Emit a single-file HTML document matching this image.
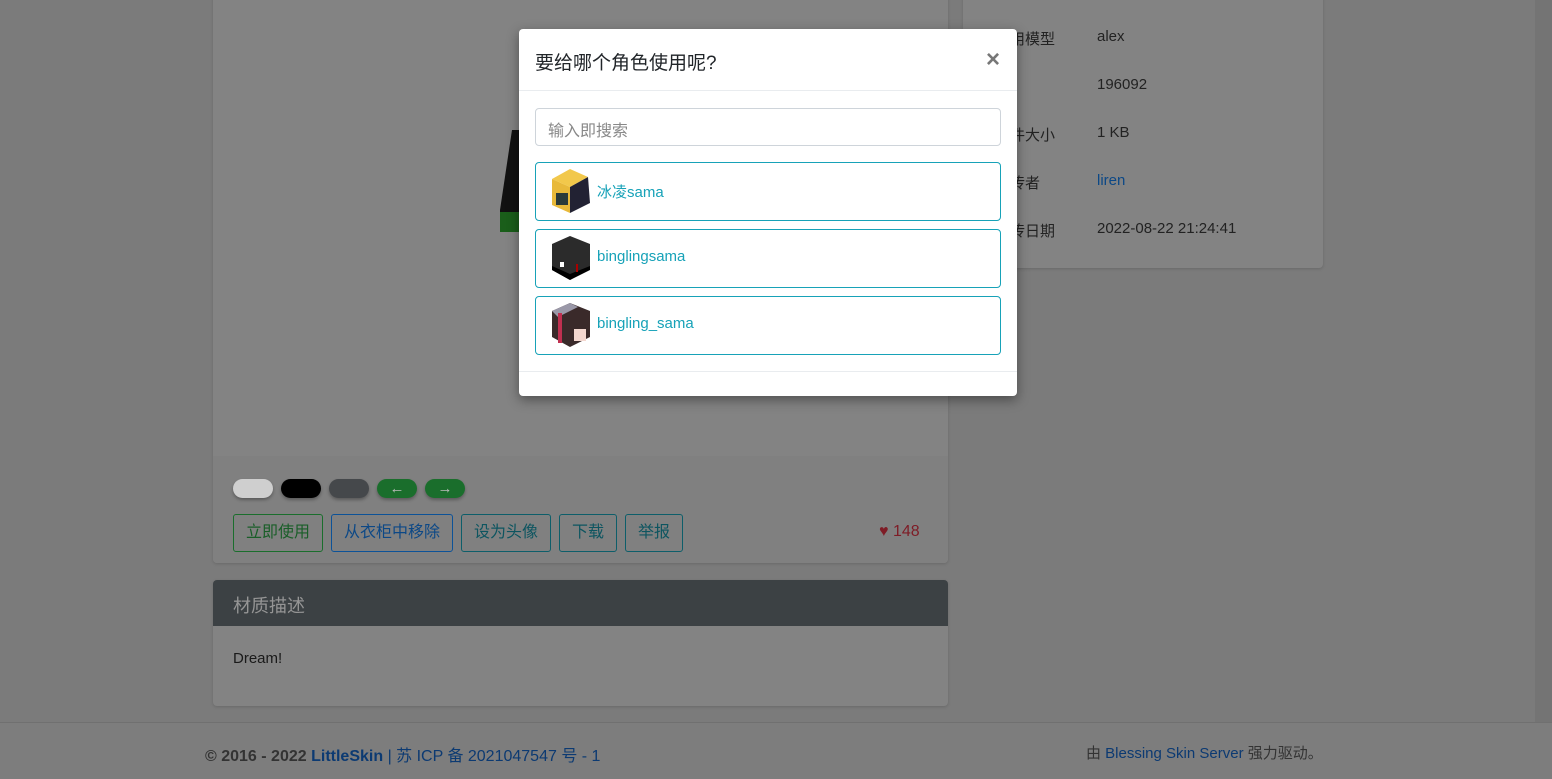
<!DOCTYPE html>
<html><head><meta charset="utf-8"><style>
*{box-sizing:border-box;margin:0;padding:0}
body{width:1552px;height:779px;overflow:hidden;background:#7b7b7b;font-family:"Liberation Sans","Noto Sans CJK SC",sans-serif;font-size:15px;color:#1a1a1a;position:relative}
.abs{position:absolute}
.card{position:absolute;background:#838383;border-radius:4px;box-shadow:0 1px 3px rgba(0,0,0,.15)}
.btn{position:absolute;top:514px;height:38px;border:1px solid;border-radius:3px;font-size:16px;line-height:36px;text-align:center}
.pill{position:absolute;top:479px;width:40px;height:19px;border-radius:10px;box-shadow:0 2px 3px rgba(0,0,0,.3);color:#bbb;text-align:center;font-size:15px;line-height:19px;font-weight:bold}
.row{position:absolute;left:1097px;color:#222;font-size:15px;top:0}
.lbl{position:absolute;left:1010px;color:#222;font-size:15px}
.item{position:absolute;left:16px;width:466px;height:59px;border:1px solid #17a2b8;border-radius:4px;color:#17a2b8;font-size:15px}
.item span{position:absolute;left:61px;top:18px}
.av{position:absolute;left:12px;top:6px;width:46px;height:44px}
</style></head><body>
<div class="abs" style="left:1535px;top:0;width:17px;height:722px;background:#747474"></div>
<div class="card" style="left:213px;top:-10px;width:735px;height:573px"></div>
<div class="abs" style="left:213px;top:456px;width:735px;height:107px;background:#808080;border-radius:0 0 4px 4px"></div>
<div class="abs" style="left:500px;top:130px;width:20px;height:100px;background:#111;clip-path:polygon(60% 0,100% 0,100% 100%,0 95%,0 80%)"></div>
<div class="abs" style="left:500px;top:212px;width:20px;height:20px;background:#1a5e1a"></div>
<div class="pill" style="left:233px;background:#cfcfcf"></div>
<div class="pill" style="left:281px;background:#000"></div>
<div class="pill" style="left:329px;background:#45484b"></div>
<div class="pill" style="left:377px;background:#1a6e2c">&#8592;</div>
<div class="pill" style="left:425px;background:#1a6e2c">&#8594;</div>
<div class="btn" style="left:233px;width:90px;border-color:#1a6e2c;color:#195e28">立即使用</div>
<div class="btn" style="left:331px;width:122px;border-color:#0c5298;color:#0c4886">从衣柜中移除</div>
<div class="btn" style="left:461px;width:90px;border-color:#0d5e6a;color:#0d5560">设为头像</div>
<div class="btn" style="left:559px;width:58px;border-color:#0d5e6a;color:#0d5560">下载</div>
<div class="btn" style="left:625px;width:58px;border-color:#0d5e6a;color:#0d5560">举报</div>
<div class="abs" style="left:879px;top:523px;color:#7e1c26;font-size:16px">&#9829; 148</div>
<div class="card" style="left:963px;top:-10px;width:360px;height:278px"></div>
<div class="lbl" style="top:28px">用模型</div><div class="row" style="top:28px">alex</div>
<div class="row" style="top:76px">196092</div>
<div class="lbl" style="top:124px">件大小</div><div class="row" style="top:124px">1 KB</div>
<div class="lbl" style="top:172px">传者</div><div class="row" style="top:172px;color:#0c4886">liren</div>
<div class="lbl" style="top:220px">传日期</div><div class="row" style="top:220px">2022-08-22 21:24:41</div>
<div class="card" style="left:213px;top:580px;width:735px;height:126px;overflow:hidden">
<div style="height:46px;background:#3c4144;color:#959595;font-size:18px;padding:12px 20px">材质描述</div>
<div style="padding:24px 20px;font-size:15px;color:#1a1a1a">Dream!</div></div>
<div class="abs" style="left:0;top:722px;width:1552px;height:57px;background:#7d7d7d;border-top:1px solid #707070"></div>
<div class="abs" style="left:205px;top:742px;font-size:16px;color:#333"><b>© 2016 - 2022 <span style="color:#0c3a72">LittleSkin</span></b> <span style="color:#0c3a72">| 苏 ICP 备 2021047547 号 - 1</span></div>
<div class="abs" style="left:1086px;top:742px;font-size:15px;color:#333">由 <span style="color:#0c3a72">Blessing Skin Server</span> 强力驱动。</div>

<div class="abs" style="left:519px;top:29px;width:498px;height:367px;background:#fff;border-radius:4px;box-shadow:0 4px 12px rgba(0,0,0,.4)">
<div style="height:62px;border-bottom:1px solid #e9ecef;padding:19px 16px;font-size:19px;color:#212529">要给哪个角色使用呢?<span style="position:absolute;right:17px;top:17px;font-size:24px;color:#777;font-weight:bold">&times;</span></div>
<div class="abs" style="left:16px;top:79px;width:466px;height:38px;border:1px solid #ced4da;border-radius:4px;color:#888;padding:8px 12px;font-size:16px">输入即搜索</div>
<div class="item" style="top:133px"><svg class="av" viewBox="0 0 46 44"><polygon points="4,10 22,0 40,8 22,18" fill="#f2c84b"/><polygon points="4,10 22,18 22,44 4,36" fill="#e8b93a"/><polygon points="22,18 40,8 42,34 22,44" fill="#223"/><rect x="8" y="24" width="12" height="12" fill="#2a3a3a"/></svg><span>冰凌sama</span></div>
<div class="item" style="top:200px"><svg class="av" viewBox="0 0 46 44"><polygon points="4,8 22,0 42,8 42,32 22,44 4,34" fill="#2b2b2b"/><polygon points="4,30 22,38 42,30 42,34 22,44 4,34" fill="#000"/><rect x="12" y="26" width="4" height="5" fill="#fff"/><rect x="28" y="28" width="2" height="8" fill="#a00"/></svg><span>binglingsama</span></div>
<div class="item" style="top:267px"><svg class="av" viewBox="0 0 46 44"><polygon points="4,8 22,0 42,8 42,34 22,44 4,34" fill="#3a2a2a"/><polygon points="4,8 22,0 30,4 10,14" fill="#9a98a8"/><rect x="10" y="10" width="4" height="30" fill="#c03050"/><rect x="26" y="26" width="12" height="12" fill="#f4d8d0"/></svg><span>bingling_sama</span></div>
<div class="abs" style="left:0;top:342px;width:498px;border-top:1px solid #e9ecef"></div>
</div>
</body></html>
